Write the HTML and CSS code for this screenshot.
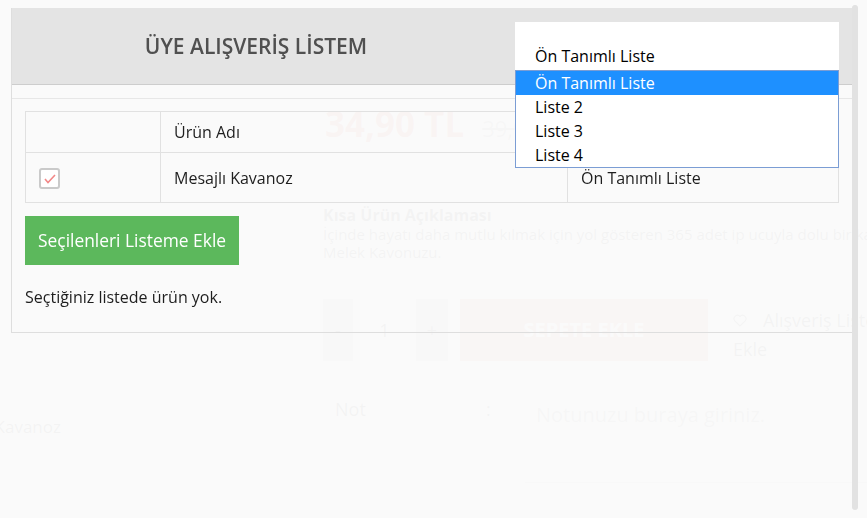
FILE: index.html
```html
<!DOCTYPE html>
<html lang="tr">
<head>
<meta charset="utf-8">
<title>Üye Alışveriş Listem</title>
<link rel="stylesheet" href="styles.css">
</head>
<body>
<div class="page">
  <div class="product">
    <div class="info">
      <div class="price-row"><span class="price">34,90 TL</span><span class="old-price">39,90 TL</span></div>
      <div class="short-title">Kısa Ürün Açıklaması</div>
      <p class="short-desc">İçinde hayatı daha mutlu kılmak için yol gösteren 365 adet ip ucuyla dolu bir kavanoz:<br>Melek Kavonuzu.</p>
      <div class="buy-row">
        <div class="qty">
          <span class="qty-btn">-</span>
          <span class="qty-val">1</span>
          <span class="qty-btn">+</span>
        </div>
        <div class="cart-btn">SEPETE EKLE</div>
        <div class="wish">
          <div class="wish-line">
            <svg class="heart" width="14" height="13" viewBox="0 0 14 13"><path d="M7 12 L1.8 6.8 A3.2 3.2 0 0 1 7 2.6 A3.2 3.2 0 0 1 12.2 6.8 Z" fill="none" stroke="#555" stroke-width="1.2"/></svg>
            <span>Alışveriş Listeme</span>
          </div>
          <div>Ekle</div>
        </div>
      </div>
    </div>
  </div>
  <div class="note-row">
    <div class="note-name"><span>Mesajlı Kavanoz</span></div>
    <div class="note-label">Not</div>
    <div class="note-colon">:</div>
    <div class="note-input">Notunuzu buraya giriniz.</div>
  </div>
</div>

<div class="backdrop"></div>

<div class="modal">
  <div class="modal-header">
    <h2 class="modal-title">ÜYE ALIŞVERİŞ LİSTEM</h2>
    <div class="select">
      <div class="select-value">Ön Tanımlı Liste</div>
      <ul class="select-list">
        <li class="active">Ön Tanımlı Liste</li>
        <li>Liste 2</li>
        <li>Liste 3</li>
        <li>Liste 4</li>
      </ul>
    </div>
  </div>
  <div class="sep"></div>
  <div class="modal-body">
    <table class="items">
      <colgroup><col class="c1"><col class="c2"><col class="c3"></colgroup>
      <thead>
        <tr><th></th><th>Ürün Adı</th><th>Liste Adı</th></tr>
      </thead>
      <tbody>
        <tr>
          <td><span class="check"><svg width="21" height="21" viewBox="0 0 21 21"><rect x="1" y="1" width="19" height="19" rx="2" fill="#fff" stroke="#cacaca" stroke-width="2"/><polyline points="6,11 9,14.5 16,7" fill="none" stroke="#f28888" stroke-width="1.6"/></svg></span></td>
          <td>Mesajlı Kavanoz</td>
          <td>Ön Tanımlı Liste</td>
        </tr>
      </tbody>
    </table>
    <button class="add-btn" type="button">Seçilenleri Listeme Ekle</button>
    <p class="empty">Seçtiğiniz listede ürün yok.</p>
  </div>
</div>

<div class="scrollbar"></div>
</body>
</html>
```

FILE: styles.css
```css
html, body {
  margin: 0;
  padding: 0;
}
body {
  background: #fff;
  font-family: "Open Sans", "DejaVu Sans", sans-serif;
  color: #222;
  overflow: hidden;
  width: 867px;
  height: 518px;
}

/* ---------- faded product page behind the modal ---------- */
.page {
  padding-top: 100px;
  color: #444;
}
.product {
  display: flex;
  padding-left: 323px;
}
.info {
  width: 640px;
  flex: none;
}
.price-row {
  display: flex;
  align-items: baseline;
  gap: 18px;
  height: 48px;
  line-height: 48px;
  padding-left: 2px;
}
.price {
  font-size: 35px;
  font-weight: 700;
  color: #d95343;
}
.old-price {
  font-size: 22px;
  color: #999;
  text-decoration: line-through;
}
.short-title {
  margin-top: 58px;
  font-size: 16px;
  line-height: 19px;
  font-weight: 700;
}
.short-desc {
  margin: 0;
  font-size: 15px;
  line-height: 18px;
  white-space: nowrap;
}
.buy-row {
  display: flex;
  margin-top: 38px;
  height: 62px;
}
.qty {
  display: flex;
  width: 125px;
}
.qty-btn {
  width: 30px;
  background: #bdbdbd;
  text-align: center;
  line-height: 62px;
  font-size: 18px;
}
.qty-btn + .qty-val + .qty-btn {
  width: 32px;
}
.qty-val {
  width: 63px;
  text-align: center;
  line-height: 62px;
  font-size: 18px;
}
.cart-btn {
  margin-left: 12px;
  width: 248px;
  background: #d98575;
  color: #fff;
  font-weight: 700;
  font-size: 20px;
  text-align: center;
  line-height: 62px;
}
.wish {
  margin-left: 25px;
  font-size: 18px;
  line-height: 29px;
  padding-top: 7px;
  white-space: nowrap;
}
.wish-line {
  display: flex;
  align-items: center;
  gap: 16px;
}
.note-row {
  display: flex;
  align-items: flex-start;
  margin-top: 34px;
  font-size: 18px;
  color: #444;
}
.note-name {
  width: 61px;
  display: flex;
  justify-content: flex-end;
  white-space: nowrap;
  margin-top: 18px;
  font-size: 17px;
  line-height: 28px;
}
.note-label {
  margin-left: 274px;
  width: 151px;
  line-height: 26px;
  margin-top: 1px;
}
.note-colon {
  width: 39px;
  line-height: 26px;
  margin-top: 1px;
}
.note-input {
  flex: 1;
  height: 81px;
  padding: 6px 0 0 11px;
  font-size: 20px;
  line-height: 28px;
  color: #888;
  border-bottom: 1px solid #ccc;
  white-space: nowrap;
}

.backdrop {
  position: fixed;
  inset: 0;
  background: rgba(250, 250, 250, 0.965);
}

/* ---------- modal ---------- */
.modal {
  position: fixed;
  top: 8px;
  left: 11px;
  width: 842px;
  box-sizing: border-box;
  border: 1px solid #dedede;
  border-top: 0;
  color: #1e1e1e;
  font-size: 16px;
}
.modal-header {
  display: flex;
  align-items: center;
  background: #e4e4e4;
  border-bottom: 1px solid #cdcdcd;
  padding: 14px 13px 14px 0;
}
.modal-title {
  margin: 0;
  width: 488px;
  margin-right: 15px;
  text-align: center;
  font-size: 21px;
  font-weight: 600;
  color: #505050;
}
.select {
  position: relative;
  width: 324px;
  height: 48px;
  box-sizing: border-box;
  background: #fff;
  padding: 23px 20px 3px;
  line-height: 22px;
  color: #000;
}
.select-list {
  position: absolute;
  top: 100%;
  left: 0;
  width: 100%;
  box-sizing: border-box;
  margin: 0;
  padding: 0;
  list-style: none;
  background: #fff;
  border: 1px solid #7b9dd4;
  z-index: 2;
}
.select-list li {
  height: 24px;
  line-height: 24px;
  padding-left: 19px;
  color: #000;
}
.select-list li.active {
  background: #1e90ff;
  color: #fff;
}
.sep {
  margin-top: 13px;
  border-top: 1px solid #e7e7e7;
}
.modal-body {
  padding: 12px 13px 24px;
}
.items {
  width: 100%;
  border-collapse: collapse;
  table-layout: fixed;
}
.items col.c1 { width: 135px; }
.items col.c2 { width: 407px; }
.items th,
.items td {
  border: 1px solid #e1e1e1;
  text-align: left;
  font-weight: 400;
  line-height: 22px;
  padding: 9px 13px;
}
.items td {
  padding: 14px 13px 13px;
}
.check {
  display: block;
  width: 21px;
  height: 21px;
  margin-top: 1px;
}
.check svg {
  display: block;
}
.add-btn {
  display: block;
  margin-top: 13px;
  border: 0;
  border-radius: 0;
  background: #5cb85c;
  color: #fff;
  font-family: inherit;
  font-size: 17.4px;
  line-height: 27px;
  padding: 11px 13px;
}
.empty {
  margin: 21px 0 0;
  line-height: 22px;
}

.scrollbar {
  position: fixed;
  left: 852px;
  top: 5px;
  width: 6px;
  height: 505px;
  border-radius: 3px;
  background: #e2e2e2;
}
```
